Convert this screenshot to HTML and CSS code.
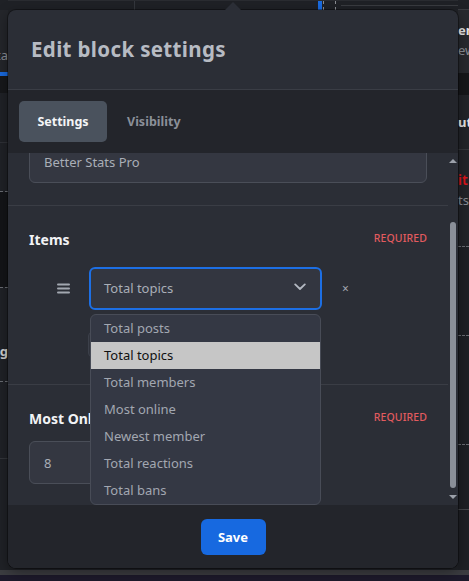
FILE: index.html
```html
<!DOCTYPE html>
<html lang="en">
<head>
<meta charset="utf-8">
<title>Edit block settings</title>
<link rel="stylesheet" href="styles.css">
</head>
<body>
<div class="backdrop">
  <div class="bg-cols">
    <div class="side side-left">
      <div class="blk l1"></div>
      <div class="blk l2"><span class="frag">Sta</span></div>
      <div class="blk l3"></div>
      <div class="blk l4"></div>
      <div class="blk l5"></div>
      <div class="blk l6"></div>
      <div class="blk l7"></div>
      <div class="blk l8"><span class="frag bold">Log</span></div>
      <div class="blk l9"></div>
    </div>
    <div class="middle">
      <div class="topbar">
        <span class="tb-cell tb1"></span>
        <span class="tb-cell tb2"></span>
        <span class="tb-bar"></span>
        <span class="tb-dash"></span>
        <span class="tb-rest"></span>
      </div>
    </div>
    <div class="side side-right">
      <div class="blk r1"></div>
      <div class="blk r2"><span class="rfrag bold">em</span><span class="rfrag">ew</span></div>
      <div class="blk r3"></div>
      <div class="blk r4"><span class="rfrag bold">uti</span></div>
      <div class="blk r5"><span class="rfrag red">it</span><span class="rfrag">ts:</span></div>
      <div class="blk r6"></div>
      <div class="blk r7"></div>
      <div class="blk r8"></div>
      <div class="blk r9"></div>
    </div>
  </div>
  <div class="bg-band"></div>
  <div class="bg-floor"></div>
</div>

<div class="modal" role="dialog" aria-label="Edit block settings">
  <header class="modal-head">
    <h2 class="modal-title">Edit block settings</h2>
  </header>
  <nav class="tabs">
    <button class="tab active">Settings</button>
    <button class="tab">Visibility</button>
  </nav>
  <div class="modal-body">
    <div class="scroll-area">
      <div class="scroll-content">
        <section class="field field-name">
          <div class="text-input">Better Stats Pro</div>
        </section>
        <section class="field field-items">
          <div class="field-head">
            <span class="label">Items</span>
            <span class="req">REQUIRED</span>
          </div>
          <div class="item-row">
            <span class="drag" aria-hidden="true">
              <svg width="13" height="11" viewBox="0 0 13 11"><rect x="0" y="0.4" width="13" height="2" rx="1" fill="#a2a7b0"/><rect x="0" y="4.5" width="13" height="2" rx="1" fill="#a2a7b0"/><rect x="0" y="8.6" width="13" height="2" rx="1" fill="#a2a7b0"/></svg>
            </span>
            <div class="select-wrap">
              <div class="select">
                <span>Total topics</span>
                <svg class="chev" width="12" height="8" viewBox="0 0 12 8"><path d="M1.2 1.4 L6 6 L10.8 1.4" fill="none" stroke="#b4b9c2" stroke-width="1.8" stroke-linecap="round" stroke-linejoin="round"/></svg>
              </div>
              <ul class="dropdown">
                <li>Total posts</li>
                <li class="hl">Total topics</li>
                <li>Total members</li>
                <li>Most online</li>
                <li>Newest member</li>
                <li>Total reactions</li>
                <li>Total bans</li>
              </ul>
            </div>
            <span class="remove">×</span>
          </div>
          <div class="add-row"><span class="add-btn">Add item</span></div>
        </section>
        <section class="field field-most">
          <div class="field-head">
            <span class="label">Most Online Users</span>
            <span class="req">REQUIRED</span>
          </div>
          <div class="text-input num">8</div>
        </section>
      </div>
    </div>
    <div class="scrollbar" aria-hidden="true">
      <span class="arrow up"></span>
      <span class="thumb"></span>
      <span class="arrow down"></span>
    </div>
  </div>
  <footer class="modal-foot">
    <button class="save">Save</button>
  </footer>
</div>
</body>
</html>
```

FILE: styles.css
```css
* { box-sizing: border-box; margin: 0; padding: 0; }

html, body { width: 469px; height: 581px; }

body {
  font-family: "Noto Sans", "Open Sans", sans-serif;
  background: #202227;
  overflow: hidden;
  position: relative;
}

/* ---------- backdrop page (behind the overlay) ---------- */
.backdrop { display: flex; flex-direction: column; height: 581px; }
.bg-cols { display: flex; height: 570px; }
.side { display: flex; flex-direction: column; overflow: hidden; }
.side-left { width: 8px; }
.side-right { width: 11px; }
.middle { flex: 1; background: #202227; }

.blk { flex: none; overflow: hidden; display: flex; flex-direction: column; }
.frag { font-size: 13px; color: #8a8e96; white-space: nowrap; align-self: flex-end; }
.rfrag { font-size: 13px; color: #8a8e96; white-space: nowrap; line-height: 20px; }
.bold { font-weight: 700; color: #e6e6e6; }
.red { color: #e0141a; font-weight: 600; font-size: 14px; }

.l1 { height: 10px; background: #1f2126; }
.l2 { height: 62px; background: #24262b; justify-content: flex-end; padding-bottom: 8px; }
.l3 { height: 4px; background: #1a6be0; }
.l4 { height: 17px; background: #17181b; }
.l5 { height: 50px; background: #202227; border-bottom: 1px solid #2f3137; }
.l6 { height: 49px; background: #202227; border-bottom: 1px dashed #6b6e74; }
.l7 { height: 95px; background: #141518; }
.l8 { height: 95px; background: #202227; border-top: 1px dashed #6b6e74; border-bottom: 1px dashed #6b6e74; padding-top: 54px; }
.l8 .frag { color: #d0d0d0; }
.l9 { flex: 1; background: #202227; border-top: 1px solid #34363b; margin-top: 76px; }

.r1 { height: 10px; background: #1f2126; border-bottom: 1px solid #3a3c41; }
.r2 { height: 63px; background: #27292e; padding-top: 10px; }
.r3 { height: 22px; background: #16171a; }
.r4 { height: 55px; background: #222429; border-bottom: 1px solid #34363b; justify-content: center; }
.r5 { height: 97px; background: #222429; border-bottom: 1px dashed #6b6e74; padding-top: 20px; }
.r6 { height: 89px; background: #1e2025; border-bottom: 1px dashed #6b6e74; }
.r7 { height: 109px; background: #1e2025; border-bottom: 1px dashed #6b6e74; }
.r8 { height: 65px; background: #1e2025; border-bottom: 1px solid #45474c; }
.r9 { flex: 1; background: #1e2025; }

.topbar { height: 10px; display: flex; background: #1f2126; border-top: 1px solid #2a2c31; }
.tb-cell { display: block; }
.tb1 { width: 127px; border-right: 1px solid #34373d; }
.tb2 { width: 183px; }
.tb-bar { width: 4px; background: #1a6be0; }
.tb-dash { width: 13px; margin-left: 1px; border-left: 1px dashed #8a8d93; border-right: 1px dashed #8a8d93; }
.tb-rest { flex: 1; margin-left: 5px; border-bottom: 1px solid #3a3c41; height: 5px; }

.bg-band { height: 5px; background: #3c3d41; }
.bg-floor { flex: 1; background: #1d1a2b; }

/* ---------- modal overlay ---------- */
.modal {
  position: absolute;
  left: 8px;
  top: 10px;
  width: 450px;
  height: 558px;
  background: #2b2e36;
  border-radius: 8px;
  box-shadow: 0 0 0 1px rgba(0, 0, 0, 0.35), 0 4px 14px rgba(0, 0, 0, 0.4);
  display: flex;
  flex-direction: column;
}
.modal::before {
  content: "";
  position: absolute;
  top: -8px;
  left: 217px;
  border-left: 8px solid transparent;
  border-right: 8px solid transparent;
  border-bottom: 8px solid #2b2e36;
}

.modal-head {
  height: 80px;
  flex: none;
  display: flex;
  align-items: center;
  padding: 0 0 2px 23px;
  border-bottom: 1px solid #3a3d45;
  border-radius: 8px 8px 0 0;
}
.modal-title {
  font-size: 20.5px;
  font-weight: 700;
  color: #b7bbc3;
  letter-spacing: 0.35px;
}

.tabs {
  height: 63px;
  flex: none;
  background: #23252b;
  display: flex;
  gap: 3px;
  padding: 11px 11px 0;
  align-items: flex-start;
}
.tab {
  height: 41px;
  padding: 0 17px;
  border: 0;
  border-radius: 5px;
  background: transparent;
  font-family: inherit;
  font-size: 12.5px;
  font-weight: 700;
  color: #8b9099;
}
.tab.active { background: #4a525d; color: #f4f5f7; width: 88px; }

/* ---------- body ---------- */
.modal-body {
  height: 352px;
  flex: none;
  display: flex;
}
.scroll-area { width: 440px; overflow: hidden; }
.scroll-content { margin-top: -13px; }

.field { padding: 0 21px; border-bottom: 1px solid #3a3d45; }
.field-name { padding-bottom: 22px; }
.field-items { padding-top: 23px; padding-bottom: 27px; }
.field-most { padding-top: 23px; border-bottom: 0; }

.text-input {
  height: 43px;
  border: 1px solid #4a4e58;
  border-radius: 6px;
  background: #343741;
  color: #a9aeb7;
  font-size: 13px;
  display: flex;
  align-items: center;
  padding-left: 14px;
}

.field-head {
  height: 20px;
  display: flex;
  align-items: center;
  justify-content: space-between;
}
.label { font-size: 14px; font-weight: 700; color: #f2f3f5; }
.req { font-size: 10.5px; font-weight: 500; color: #e25b5f; letter-spacing: 0.1px; margin-top: -3px; }

.item-row {
  margin-top: 18px;
  display: flex;
  align-items: center;
}
.drag { width: 13px; height: 11px; margin-left: 28px; margin-right: 19px; display: flex; }
.select-wrap { position: relative; width: 233px; }
.select {
  height: 43px;
  border: 2px solid #1d6fe4;
  border-radius: 6px;
  background: #333640;
  color: #a9aeb7;
  font-size: 13px;
  display: flex;
  align-items: center;
  justify-content: space-between;
  padding: 0 14px 1px 13px;
}
.chev { margin-top: -2px; }
.remove { margin-left: 20px; font-size: 12px; color: #a2a7b0; line-height: 1; }

.dropdown {
  list-style: none;
  position: absolute;
  top: 47px;
  left: 1px;
  width: 231px;
  background: #343844;
  border: 1px solid #484c57;
  border-radius: 6px;
  overflow: hidden;
  z-index: 5;
}
.dropdown li {
  height: 27px;
  line-height: 27px;
  padding-left: 13px;
  font-size: 13px;
  color: #a2a7b1;
}
.dropdown li.hl { background: #c6c6c6; color: #111; }

.add-row { margin-top: 22px; padding-left: 59px; }
.add-btn {
  display: inline-block;
  height: 25px;
  line-height: 23px;
  padding: 0 12px;
  border: 1px solid #3c404a;
  border-radius: 4px;
  background: #30333c;
  font-size: 12px;
  color: #a2a7b1;
}

.field-most .text-input { margin-top: 13px; width: 180px; }

/* ---------- custom scrollbar ---------- */
.scrollbar {
  width: 10px;
  display: flex;
  flex-direction: column;
  align-items: center;
  padding-top: 6px;
}
.arrow { width: 0; height: 0; border-left: 4px solid transparent; border-right: 4px solid transparent; }
.arrow.up { border-bottom: 4px solid #9ca1aa; }
.arrow.down { border-top: 4px solid #9ca1aa; margin-top: 7px; }
.thumb { width: 6px; height: 266px; margin-top: 59px; border-radius: 3px; background: #8a8f98; }

/* ---------- footer ---------- */
.modal-foot {
  flex: 1;
  background: #23252b;
  border-radius: 0 0 8px 8px;
  display: flex;
  justify-content: center;
  padding-top: 14px;
}
.save {
  width: 65px;
  height: 36px;
  border: 0;
  border-radius: 6px;
  background: #1769e0;
  color: #fff;
  font-family: inherit;
  font-size: 13px;
  font-weight: 700;
}
```
